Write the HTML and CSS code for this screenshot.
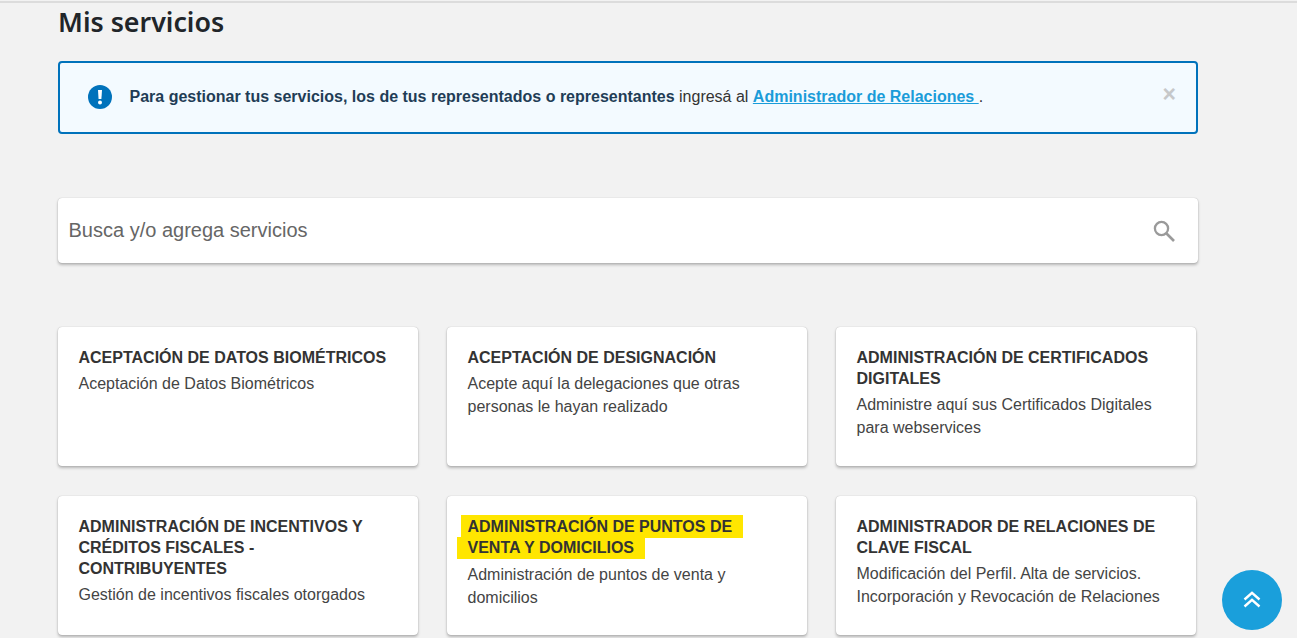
FILE: index.html
```html
<!DOCTYPE html>
<html lang="es">
<head>
<meta charset="utf-8">
<title>Mis servicios</title>
<link rel="stylesheet" href="styles.css">
</head>
<body>
<main class="page">
  <h1 class="title">Mis servicios</h1>
  <div class="alert">
    <svg class="alert-icon" viewBox="0 0 24 24" width="24" height="24" aria-hidden="true">
      <circle cx="12" cy="12" r="12" fill="#0072bb"/>
      <path d="M10 5h4l-.6 9h-2.8z" fill="#fff"/>
      <circle cx="12" cy="17.6" r="2" fill="#fff"/>
    </svg>
    <p class="alert-text"><strong>Para gestionar tus servicios, los de tus representados o representantes</strong> ingresá al <a href="#" class="alert-link">Administrador de Relaciones </a>.</p>
    <span class="alert-close">×</span>
  </div>
  <div class="search">
    <span class="search-label">Busca y/o agrega servicios</span>
    <svg class="search-icon" viewBox="0 0 24 24" width="24" height="24" aria-hidden="true">
      <circle cx="9.5" cy="9.5" r="6.6" fill="none" stroke="#9a9a9a" stroke-width="2.3"/>
      <path d="M14.5 14.5 22 22" stroke="#9a9a9a" stroke-width="2.6" fill="none"/>
    </svg>
  </div>
  <div class="grid">
    <article class="card">
      <h3 class="card-title">ACEPTACIÓN DE DATOS BIOMÉTRICOS</h3>
      <p class="card-text">Aceptación de Datos Biométricos</p>
    </article>
    <article class="card">
      <h3 class="card-title">ACEPTACIÓN DE DESIGNACIÓN</h3>
      <p class="card-text">Acepte aquí la delegaciones que otras personas le hayan realizado</p>
    </article>
    <article class="card">
      <h3 class="card-title">ADMINISTRACIÓN DE CERTIFICADOS DIGITALES</h3>
      <p class="card-text">Administre aquí sus Certificados Digitales para webservices</p>
    </article>
    <article class="card">
      <h3 class="card-title">ADMINISTRACIÓN DE INCENTIVOS Y CRÉDITOS FISCALES - CONTRIBUYENTES</h3>
      <p class="card-text">Gestión de incentivos fiscales otorgados</p>
    </article>
    <article class="card">
      <h3 class="card-title">
        <span class="mark mark-first">ADMINISTRACIÓN DE PUNTOS DE</span>
        <span class="mark mark-second">VENTA Y DOMICILIOS</span>
      </h3>
      <p class="card-text">Administración de puntos de venta y domicilios</p>
    </article>
    <article class="card">
      <h3 class="card-title">ADMINISTRADOR DE RELACIONES DE CLAVE FISCAL</h3>
      <p class="card-text">Modificación del Perfil. Alta de servicios. Incorporación y Revocación de Relaciones</p>
    </article>
  </div>
</main>
<button class="to-top" type="button" aria-label="Subir">
  <svg viewBox="0 0 20 20" width="20" height="20" aria-hidden="true">
    <path d="M2.5 9.5 10 2.8l7.5 6.7M2.5 16.5 10 9.8l7.5 6.7" fill="none" stroke="#fff" stroke-width="2.4"/>
  </svg>
</button>
</body>
</html>
```
FILE: styles.css
```css
* { box-sizing: border-box; }
html, body { height: 100%; overflow: hidden; }
body {
  margin: 0;
  background: #f2f2f2;
  font-family: "Liberation Sans", Arial, sans-serif;
  color: #333;
  padding-top: 3px;
}
body::before {
  content: "";
  position: absolute;
  left: 0;
  right: 0;
  top: 1px;
  height: 2px;
  background: #dcdcdc;
}
.page { width: 1140px; margin-left: 58px; }
.title {
  margin: 0;
  font-family: "Noto Sans", "Open Sans", sans-serif;
  font-size: 26.8px;
  font-weight: 600;
  line-height: 38px;
  color: #212529;
}
.alert {
  margin-top: 20px;
  height: 73px;
  display: flex;
  align-items: center;
  padding: 0 27px 0 28px;
  background: #f3faff;
  border: 2px solid #0072bb;
  border-radius: 4px;
}
.alert-icon { flex: none; margin-top: -2px; }
.alert-text {
  margin: -2px 0 0 17.5px;
  flex: 1;
  font-size: 16px;
  line-height: 24px;
  color: #333;
}
.alert-text strong { color: #1f3d56; }
.alert-link { color: #1a9cd9; font-weight: 700; text-decoration: underline; }
.alert-close {
  align-self: flex-start;
  margin: 17px -7px 0 0;
  font-size: 23px;
  line-height: 28px;
  font-weight: 700;
  color: #c6c8ca;
}
.search {
  margin-top: 64px;
  height: 65px;
  display: flex;
  align-items: center;
  justify-content: space-between;
  padding: 0 22px 0 10.5px;
  background: #fff;
  border-radius: 4px;
  box-shadow: 0 0 1px rgba(0,0,0,.3), 0 2px 3px rgba(0,0,0,.25);
}
.search-label { font-size: 20px; color: #666; margin-top: -1px; }
.search-icon { flex: none; }
.grid {
  margin-top: 64px;
  display: grid;
  grid-template-columns: repeat(3, 360px);
  grid-auto-rows: 139px;
  column-gap: 29px;
  row-gap: 30px;
}
.card {
  padding: 20px 20px 0 20.5px;
  background: #fff;
  border-radius: 4px;
  box-shadow: 0 0 1px rgba(0,0,0,.3), 0 2px 3px rgba(0,0,0,.25);
}
.card-title {
  margin: 0;
  font-size: 16px;
  font-weight: 700;
  line-height: 21px;
  color: #333;
}
.card-text {
  margin: 5px 0 0;
  font-size: 16px;
  line-height: 22.7px;
  color: #444;
}
.mark { display: block; width: fit-content; background: #ffe600; }
.mark-first { margin-left: -7px; padding: 1px 11px 1px 7px; margin-top: -1px; }
.mark-second { margin-left: -11px; padding: 0 11px 1px 11px; margin-top: -1px; }
.to-top {
  position: fixed;
  left: 1222px;
  top: 570px;
  width: 60px;
  height: 60px;
  padding: 0;
  border: 0;
  border-radius: 50%;
  background: #1a9fdb;
  display: flex;
  align-items: center;
  justify-content: center;
}
```
